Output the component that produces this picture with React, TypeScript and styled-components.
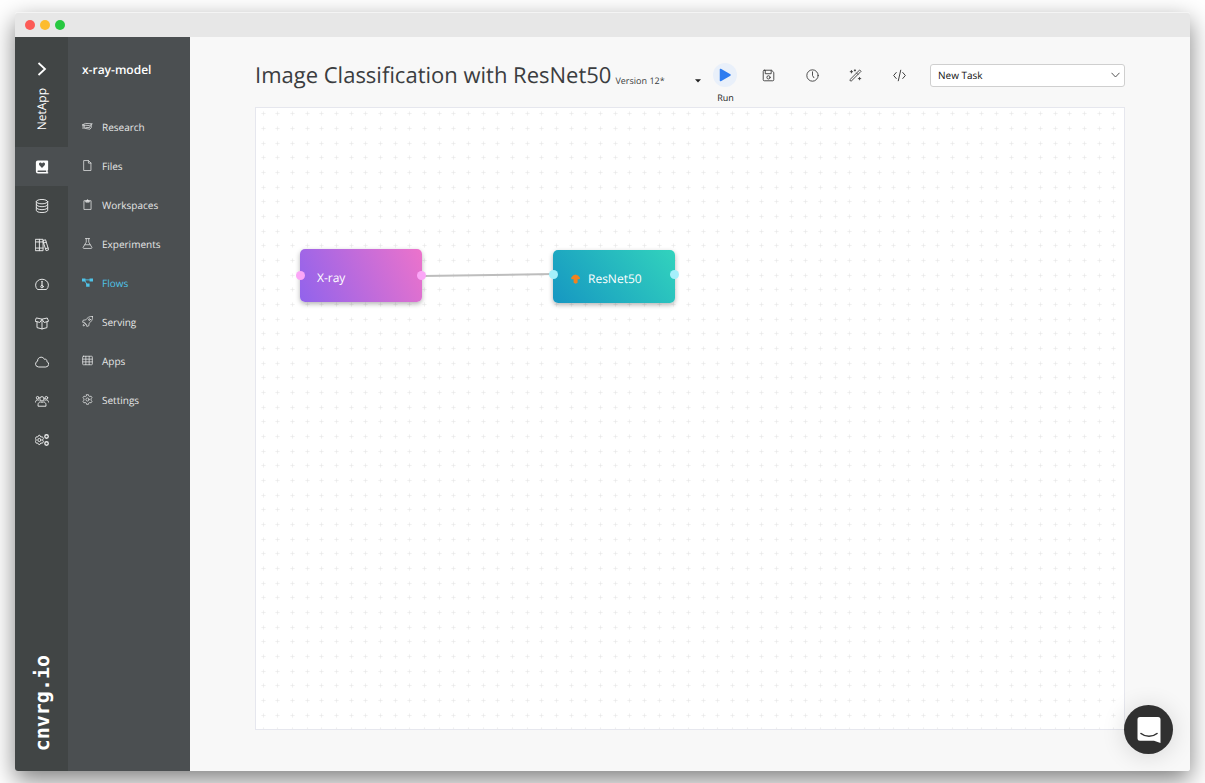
import React from "react";
import styled, { createGlobalStyle, css } from "styled-components";

const GlobalStyle = createGlobalStyle`
  *, *::before, *::after { box-sizing: border-box; }
  body {
    margin: 0;
    background: #fff;
    color: #3b3d40;
    font-family: "Open Sans", "Noto Sans", sans-serif;
    font-size: 10px;
    line-height: 16px;
    text-rendering: geometricPrecision;
  }
  button, select { font: inherit; color: inherit; text-rendering: inherit; }
`;

const Page = styled.div`
  display: flex;
  min-height: 100vh;
  padding: 12px 15px;
`;

const AppWindow = styled.div`
  position: relative;
  flex: 1;
  display: flex;
  flex-direction: column;
  min-width: 0;
  border-radius: 3px;
  box-shadow: 0 9px 24px rgba(0, 0, 0, 0.5);
`;

const TitleBar = styled.div`
  display: flex;
  align-items: center;
  gap: 5px;
  height: 25px;
  padding-left: 10px;
  background: #e7e7e7;
  border-top: 1px solid #f4f4f4;
  border-radius: 3px 3px 0 0;
`;

const Light = styled.span<{ $color: string }>`
  width: 10px;
  height: 10px;
  border-radius: 50%;
  background: ${(p) => p.$color};
`;

const Body = styled.div`
  flex: 1;
  display: flex;
  min-height: 0;
`;

const Rail = styled.nav`
  display: flex;
  flex-direction: column;
  align-items: stretch;
  width: 53px;
  background: #414545;
  color: #e9eaea;
  border-radius: 0 0 0 3px;
`;

const RailTop = styled.div`
  display: flex;
  flex-direction: column;
  align-items: center;
  height: 110px;
  padding-top: 24px;
  gap: 11px;
  color: #fff;
`;

const IconButton = styled.button`
  display: flex;
  align-items: center;
  justify-content: center;
  padding: 0;
  border: 0;
  background: none;
  cursor: pointer;
`;

const Org = styled.span`
  writing-mode: vertical-rl;
  transform: rotate(180deg);
  font-size: 12px;
  line-height: 16px;
`;

const RailLink = styled.a<{ $active?: boolean }>`
  display: flex;
  align-items: center;
  justify-content: center;
  height: 39px;
  color: ${(p) => (p.$active ? "#fff" : "inherit")};
  background: ${(p) => (p.$active ? "#4b4f51" : "transparent")};
`;

const Brand = styled.span`
  writing-mode: vertical-rl;
  transform: rotate(180deg);
  align-self: center;
  margin: auto 0 20px;
  color: #fff;
  font: bold 20px/24px "DejaVu Sans Mono", monospace;
`;

const Sidebar = styled.nav`
  width: 122px;
  background: #4b4f51;
  color: #e6e7e7;
`;

const ProjectName = styled.h2`
  height: 70px;
  margin: 0;
  padding: 25px 0 0 14px;
  color: #fff;
  font-size: 12px;
  font-weight: 600;
  line-height: 16px;
`;

const SideLink = styled.a<{ $active?: boolean }>`
  display: flex;
  align-items: center;
  gap: 9px;
  height: 39px;
  padding-left: 14px;
  color: ${(p) => (p.$active ? "#4fc3e8" : "inherit")};
  text-decoration: none;
`;

const Main = styled.main`
  flex: 1;
  display: flex;
  flex-direction: column;
  min-width: 0;
  padding: 0 65px 41px;
  background: #f8f8f8;
  border-radius: 0 0 3px 0;
`;

const Header = styled.header`
  display: flex;
  align-items: center;
  height: 70px;
  padding-top: 6px;
`;

const Title = styled.h1`
  margin: 0;
  font-size: 22px;
  font-weight: 400;
  line-height: 32px;
  white-space: nowrap;
`;

const SelectBox = styled.div`
  display: flex;
  align-items: center;
  position: relative;
`;

const bareSelect = css`
  width: 100%;
  appearance: none;
  border: 0;
  background: none;
  outline: none;
`;

const VersionBox = styled(SelectBox)`
  width: 88px;
  margin-left: 4px;
  padding-top: 12px;
`;

const VersionSelect = styled.select`
  ${bareSelect}
  padding: 0;
  font-size: 9px;
`;

const TaskBox = styled(SelectBox)`
  width: 195px;
  margin-left: auto;
`;

const TaskSelect = styled.select`
  ${bareSelect}
  height: 23px;
  padding: 0 7px;
  color: #111;
  background: #fff;
  border: 1px solid #cfcfcf;
  border-radius: 3px;
`;

const Indicator = styled.span<{ $right: number }>`
  position: absolute;
  right: ${(p) => p.$right}px;
  display: flex;
  pointer-events: none;
`;

const Tools = styled.div`
  display: flex;
  justify-content: space-between;
  width: 198px;
  margin-left: 10px;
`;

const ToolButton = styled(IconButton)<{ $primary?: boolean }>`
  position: relative;
  width: 24px;
  height: 24px;
  border-radius: 50%;
  color: #3a3a3a;
  background: ${(p) => (p.$primary ? "#e9f0fa" : "none")};
`;

const ToolLabel = styled.span`
  position: absolute;
  top: 27px;
  font-size: 9px;
  line-height: 16px;
  color: #222;
`;

const Canvas = styled.section`
  position: relative;
  flex: 1;
  min-height: 320px;
  background: #fff;
  border: 1px solid #e6e7ee;
  overflow: hidden;
`;

const Grid = styled.svg`
  display: block;
  position: absolute;
  width: 100%;
  height: 100%;
`;

const Node = styled.div<{ $x: number; $y: number; $fill: string }>`
  position: absolute;
  left: ${(p) => p.$x}px;
  top: ${(p) => p.$y}px;
  display: flex;
  align-items: center;
  gap: 7px;
  width: 122px;
  height: 53px;
  padding: 4px 17px 0;
  border-radius: 5px;
  background: ${(p) => p.$fill};
  box-shadow: 0 2px 5px rgba(0, 0, 0, 0.3);
  color: #fff;
  font-size: 12px;
`;

const Port = styled.span<{ $side: "left" | "right"; $y: number; $color: string }>`
  position: absolute;
  top: ${(p) => p.$y}px;
  ${(p) => p.$side}: -4px;
  width: 9px;
  height: 9px;
  border-radius: 50%;
  background: ${(p) => p.$color};
`;

const Launcher = styled(IconButton)`
  position: absolute;
  right: 17px;
  bottom: 17px;
  width: 49px;
  height: 49px;
  border-radius: 50%;
  background: #303030;
  box-shadow: 0 2px 24px rgba(0, 0, 0, 0.14);
`;

type IconProps = { size?: number; children: React.ReactNode };

/* Thin outline icon on a 16 unit grid. */
const Icon = ({ size = 14, children }: IconProps) => (
  <svg
    width={size}
    height={size}
    viewBox="0 0 16 16"
    fill="none"
    stroke="currentColor"
    strokeWidth="1.1"
    strokeLinecap="round"
    strokeLinejoin="round"
    aria-hidden="true"
  >
    {children}
  </svg>
);

const icons = {
  book: (
    <path
      fill="currentColor"
      stroke="none"
      fillRule="evenodd"
      d="M3.2 .5H14a1 1 0 0 1 1 1v9.4a1 1 0 0 1-.5.8v2.2a.8.8 0 0 1 0 1.6H3.4A2.4 2.4 0 0 1 1 13.1V2.7A2.2 2.2 0 0 1 3.2 .5ZM8 9l3-3.1c1.5-1.7-.8-4-2.4-2.4L8 4l-.6-.5C5.8 1.9 3.5 4.2 5 5.9ZM3.6 12a.9.9 0 0 0 0 1.8H12.8V12Z"
    />
  ),
  database: (
    <>
      <ellipse cx="8" cy="3" rx="6.5" ry="2.5" />
      <path d="M1.5 3v10c0 1.4 2.9 2.5 6.5 2.5s6.5-1.1 6.5-2.5V3M1.5 6.3c0 1.4 2.9 2.5 6.5 2.5s6.5-1.1 6.5-2.5M1.5 9.7c0 1.4 2.9 2.5 6.5 2.5s6.5-1.1 6.5-2.5" />
    </>
  ),
  books: (
    <>
      <path d="M.8 1.5h8.4v13H.8ZM5 1.5v13M.8 4.5h8.4M.8 11.5h8.4" />
      <path d="M9.2 3 12 2l3.6 11.500-2.900 1L9.200 4M9.800 5.700l2.900-.9M11.900 12.300l2.900-.9" />
    </>
  ),
  gauge: (
    <>
      <path d="M2.6 14A7.400 6.800 0 1 1 13.400 14Z" />
      <path d="M8 4.800v4.700" strokeWidth="1.3" />
      <circle cx="8" cy="11" r="1.4" />
    </>
  ),
  box: (
    <path d="M2.3 7v6.300L8 14.800l5.700-1.500V7M8 4v10.800M2 2.300 8 3.600l6-1.300L15.500 6l-5 1.400L8 3.800 5.500 7.400.5 6Z" />
  ),
  cloud: (
    <path d="M3.800 13.700a3.400 3.400 0 0 1-.9-6.600C2.800 4.300 4.700 2.500 7 2.500c1.700 0 3 .9 3.700 2.400 1.800-.6 3.200.7 2.800 2.600a3.200 3.200 0 0 1-.8 6.200Z" />
  ),
  users: (
    <>
      <circle cx="8" cy="5.5" r="2.5" />
      <circle cx="3" cy="4.3" r="1.5" />
      <circle cx="13" cy="4.3" r="1.5" />
      <path d="M3.500 13.500v-1.400c0-1.800 1.300-3 3-3 1 .5 2 .5 3 0 1.700 0 3 1.200 3 3v1.400ZM.6 9.200c0-1.600.9-2.400 2.400-2.400.8 0 1.300.3 1.700.6M15.400 9.200c0-1.600-.9-2.400-2.400-2.400-.8 0-1.300.3-1.700.6" />
    </>
  ),
  gears: (
    <>
      <path d="M5.500 2.800 6.600 4.500 8.600 4.400 9.600 6.200 8.600 8 9.600 9.800 8.600 11.600 6.600 11.500 5.500 13.200H4.300L3.200 11.500 1.400 11.600.5 9.800 1.400 8 .5 6.200 1.400 4.400 3.200 4.500 4.300 2.800Z" />
      <circle cx="5" cy="8" r="1.8" />
      <circle cx="13.2" cy="4" r="2" strokeWidth="1.5" />
      <circle cx="13.2" cy="12" r="2" strokeWidth="1.5" />
    </>
  ),
  research: (
    <path d="M.8 5.500 5 3.500l10 .6-3.500 2.300ZM3.300 6.200v4.300l8.200 1.500L13.500 9.500V5.500M5.500 9.300l5.500.3 1-2.500M1.500 6v5" />
  ),
  file: <path d="M3 .8h6.500L13 4.300v11H3ZM9.300 1v3.500H13" />,
  clipboard: (
    <>
      <path d="M5 2.500H2.800v12.700h10.400V2.500H11" />
      <path fill="currentColor" d="M5.500 4V2.300h1.300a1.200 1.200 0 0 1 2.400 0h1.300V4Z" />
    </>
  ),
  flask: (
    <path d="M5 .8h6M6.200 1v5L1.700 13.500c-.4.900.1 1.700 1 1.700h10.600c.9 0 1.400-.8 1-1.700L9.800 6V1M4.300 9.800h7.400" />
  ),
  flows: (
    <>
      <path d="M3 4.200h10M3.500 4.500 8 12" strokeWidth="1.3" />
      <path fill="currentColor" stroke="none" d="M0 2h5v4.500H0ZM11 2h5v4.500h-5ZM6 9.500h5V14H6Z" />
    </>
  ),
  rocket: (
    <>
      <path d="M15.300.7C10.500.3 8 2.200 5.500 5.700L1.800 6 .8 9l3 .5 2.700 2.700.5 3 3-1 .3-3.700c3.500-2.500 5.400-5 5-9.800Z" />
      <circle cx="10.8" cy="5.2" r="1.3" />
      <path d="M3.500 11c-1.200.4-1.800 1.700-1.800 3.300 1.600 0 2.900-.6 3.300-1.800" />
    </>
  ),
  apps: (
    <>
      <rect x="1" y="1.8" width="14" height="12.4" rx="1" />
      <path d="M1 6h14M1 10h14M5.600 2v12M10.400 2v12" />
    </>
  ),
  settings: (
    <>
      <path d="M6.600 1h2.800l.5 2 1.300.7 2-.6 1.400 2.400L13.100 7v2l1.500 1.500-1.400 2.400-2-.6-1.300.7-.5 2H6.600l-.5-2-1.300-.7-2 .6-1.400-2.400L2.900 9V7L1.400 5.500l1.400-2.400 2 .6L6.100 3Z" />
      <circle cx="8" cy="8" r="2.3" />
    </>
  ),
  save: (
    <>
      <path d="M2.800 1.500h9l2.700 2.700v9a1.300 1.300 0 0 1-1.300 1.300H2.800a1.300 1.300 0 0 1-1.300-1.300V2.800a1.300 1.300 0 0 1 1.300-1.300ZM4 1.800v4h7.300v-4" />
      <circle cx="8" cy="10.3" r="2" />
    </>
  ),
  clock: (
    <>
      <circle cx="8" cy="8" r="7" />
      <path d="M8 3.500V8l1.700 2.700" />
    </>
  ),
  wand: (
    <>
      <path d="M1.200 13.100 13.100 1.200l1.700 1.700L2.900 14.800ZM9.300 5l1.700 1.700" />
      <path d="M3 1.800v3M1.500 3.300h3M13 10.300v3M11.500 11.800h3M7.300.9v1.600M6.500 1.700h1.600" />
    </>
  ),
  code: <path d="M4 4.300.8 8 4 11.700M12 4.300 15.200 8 12 11.700M9.500 1.500l-3 13" strokeWidth="1.2" />,
};

type IconName = keyof typeof icons;

const railItems: { name: string; icon: IconName }[] = [
  { name: "Projects", icon: "book" },
  { name: "Datasets", icon: "database" },
  { name: "Library", icon: "books" },
  { name: "Dashboard", icon: "gauge" },
  { name: "Containers", icon: "box" },
  { name: "Compute", icon: "cloud" },
  { name: "Team", icon: "users" },
  { name: "Administration", icon: "gears" },
];

const sideItems: { name: string; icon: IconName }[] = [
  { name: "Research", icon: "research" },
  { name: "Files", icon: "file" },
  { name: "Workspaces", icon: "clipboard" },
  { name: "Experiments", icon: "flask" },
  { name: "Flows", icon: "flows" },
  { name: "Serving", icon: "rocket" },
  { name: "Apps", icon: "apps" },
  { name: "Settings", icon: "settings" },
];

const tools: { name: string; icon: IconName }[] = [
  { name: "Save", icon: "save" },
  { name: "History", icon: "clock" },
  { name: "Arrange", icon: "wand" },
  { name: "Code", icon: "code" },
];

const markColumns = [7, 21, 36];
const markRows = [5, 20, 35];

export default function App() {
  return (
    <>
      <GlobalStyle />
      <Page>
        <AppWindow>
          <TitleBar>
            <Light $color="#fc5b57" />
            <Light $color="#fdbc2e" />
            <Light $color="#27c840" />
          </TitleBar>
          <Body>
            <Rail aria-label="Organization">
              <RailTop>
                <IconButton aria-label="Expand">
                  <svg width="10" height="16" viewBox="0 0 10 16" fill="none" stroke="#fff" strokeWidth="1.8">
                    <path d="M1.500 2 8 8 1.500 14" />
                  </svg>
                </IconButton>
                <Org>NetApp</Org>
              </RailTop>
              {railItems.map((item, i) => (
                <RailLink key={item.name} href="#" aria-label={item.name} $active={i === 0}>
                  <Icon>{icons[item.icon]}</Icon>
                </RailLink>
              ))}
              <Brand>cnvrg.io</Brand>
            </Rail>
            <Sidebar aria-label="Project">
              <ProjectName>x-ray-model</ProjectName>
              {sideItems.map((item) => (
                <SideLink key={item.name} href="#" $active={item.name === "Flows"}>
                  <Icon size={11}>{icons[item.icon]}</Icon>
                  {item.name}
                </SideLink>
              ))}
            </Sidebar>
            <Main>
              <Header>
                <Title>Image Classification with ResNet50</Title>
                <VersionBox>
                  <VersionSelect aria-label="Version">
                    <option>Version 12*</option>
                  </VersionSelect>
                  <Indicator $right={2}>
                    <svg width="6" height="4" viewBox="0 0 6 4">
                      <path d="M0 .3h6L3 3.600Z" fill="#222" />
                    </svg>
                  </Indicator>
                </VersionBox>
                <Tools>
                  <ToolButton $primary>
                    <svg width="12" height="14" viewBox="0 0 12 14" aria-hidden="true">
                      <path d="M1.500 1.500v11l9.500-5.500Z" fill="#2e7cf0" stroke="#2e7cf0" strokeWidth="1.5" strokeLinejoin="round" />
                    </svg>
                    <ToolLabel>Run</ToolLabel>
                  </ToolButton>
                  {tools.map((tool) => (
                    <ToolButton key={tool.name} aria-label={tool.name}>
                      <Icon size={13}>{icons[tool.icon]}</Icon>
                    </ToolButton>
                  ))}
                </Tools>
                <TaskBox>
                  <TaskSelect aria-label="Task">
                    <option>New Task</option>
                  </TaskSelect>
                  <Indicator $right={5}>
                    <svg width="9" height="6" viewBox="0 0 9 6" fill="none" stroke="#555">
                      <path d="M.5.8 4.500 5 8.500.8" />
                    </svg>
                  </Indicator>
                </TaskBox>
              </Header>
              <Canvas aria-label="Flow">
                <Grid aria-hidden="true">
                  <defs>
                    <pattern id="marks" width="44" height="44" patternUnits="userSpaceOnUse">
                      {markColumns.map((x) =>
                        markRows.map((y) => (
                          <g key={`${x}-${y}`}>
                            <path d={`M${x - 2} ${y + 0.5}h5M${x + 0.5} ${y - 2}v5`} stroke="#f6f6f6" />
                            <circle cx={x + 0.5} cy={y + 0.5} r="1" fill="#e9e9e9" />
                          </g>
                        )),
                      )}
                    </pattern>
                  </defs>
                  <rect width="100%" height="100%" fill="url(#marks)" />
                  <path d="M167 168 298 166" stroke="#bdbdbd" strokeWidth="2" />
                </Grid>
                <Node $x={44} $y={141} $fill="linear-gradient(65deg, #9163ec, #ec73cb)">
                  <Port $side="left" $y={22} $color="#fba6f7" />
                  X-ray
                  <Port $side="right" $y={22} $color="#fba6f7" />
                </Node>
                <Node $x={297} $y={142} $fill="linear-gradient(50deg, #1697c2, #32d3bd)">
                  <Port $side="left" $y={20} $color="#a5f0fb" />
                  <svg width="11" height="10" viewBox="0 0 11 10" aria-hidden="true">
                    <path d="M1 4 3 1.500 5.500.6 8 1.500 10.200 4 9.400 5.300H7.600V8.700L5.700 9.700 3.600 8.700V5.300H1.600Z" fill="#f0821f" />
                  </svg>
                  ResNet50
                  <Port $side="right" $y={20} $color="#a5f0fb" />
                </Node>
              </Canvas>
            </Main>
          </Body>
          <Launcher aria-label="Open chat">
            <svg width="26" height="28" viewBox="0 0 26 28" aria-hidden="true">
              <path d="M4 1h18a2.500 2.500 0 0 1 2.500 2.500V27L18 24.800H4a2.500 2.500 0 0 1-2.500-2.500V3.500A2.500 2.500 0 0 1 4 1Z" fill="#fff" />
              <path d="M5 17.500c4.500 3.700 11.500 3.700 16 0" fill="none" stroke="#303030" strokeWidth="1.6" strokeLinecap="round" />
            </svg>
          </Launcher>
        </AppWindow>
      </Page>
    </>
  );
}
